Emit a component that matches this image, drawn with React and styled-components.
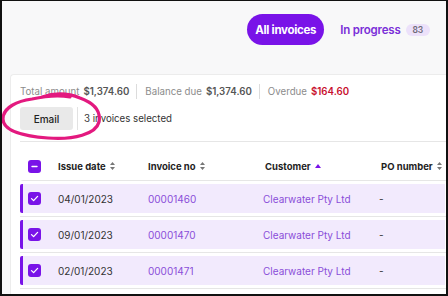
import React from "react";
import styled, { createGlobalStyle } from "styled-components";

const GlobalStyle = createGlobalStyle`
  html, body { margin: 0; padding: 0; background: #fff; }
  body { font-family: Inter, "Noto Sans", sans-serif; }
  * { box-sizing: border-box; }
`;

const purple = "#7913e8";

const Frame = styled.div`
  position: relative;
  width: 448px;
  height: 296px;
  overflow: hidden;
  border-style: solid;
  border-color: #111;
  border-width: 1px 2px 2px 2px;
  background: #f8f8f9;
`;

const Tabs = styled.div`
  display: flex;
  justify-content: flex-end;
  align-items: center;
  gap: 16px;
  height: 73px;
  padding: 13px 16px 29px 0;
`;

const Pill = styled.div`
  height: 31px;
  padding: 0 8px;
  border-radius: 16px;
  background: ${purple};
  color: #fff;
  font-size: 11.5px;
  font-weight: 700;
  letter-spacing: -0.3px;
  display: flex;
  align-items: center;
`;

const Tab = styled.div`
  display: flex;
  align-items: center;
  gap: 5px;
  color: #7a2fd8;
  font-size: 11.5px;
  font-weight: 600;
  letter-spacing: -0.2px;
`;

const Badge = styled.span`
  background: #ece1fa;
  color: #6e6a78;
  font-size: 8.5px;
  border-radius: 6px;
  padding: 1px 7px;
`;

const Card = styled.div`
  margin-left: 8px;
  height: 240px;
  background: #fff;
  border: 1px solid #ececec;
  border-right: none;
  border-radius: 4px 0 0 0;
  padding: 9px 0 0 9px;
`;

const Summary = styled.div`
  display: flex;
  align-items: center;
  height: 15px;
  font-size: 9.7px;
`;

const Stat = styled.span`
  color: #8c8c8c;
  padding: 0 7px;
  border-left: ${({ first }) => (first ? "none" : "1px solid #dcdcdc")};
  padding-left: ${({ first }) => (first ? "0" : "8px")};
  line-height: 15px;
  b {
    margin-left: 4px;
    font-weight: 600;
    color: ${({ red }) => (red ? "#c8102e" : "#555")};
  }
`;

const Actions = styled.div`
  display: flex;
  align-items: center;
  margin-top: 8px;
  height: 23px;
  font-size: 9.7px;
  color: #333;
`;

const EmailButton = styled.button`
  width: 53px;
  height: 23px;
  border: none;
  border-radius: 3px;
  background: #e9e9e9;
  font-family: inherit;
  font-size: 10px;
  font-weight: 500;
  color: #222;
  padding: 0;
`;

const Sep = styled.span`
  width: 1px;
  height: 23px;
  background: #e2e2e2;
  margin: 0 6px 0 4px;
`;

const Divider = styled.div`
  height: 1px;
  background: #e6e6e6;
  margin-top: 11px;
`;

const Grid = styled.div`
  display: grid;
  grid-template-columns: 30px 90px 115px 116px 1fr;
  align-items: center;
  white-space: nowrap;
  border-left: 3px solid ${({ selected }) => (selected ? purple : "transparent")};
  padding-left: 5px;
`;

const Header = styled(Grid)`
  height: 39px;
  padding-top: 10px;
  border-bottom: 1px solid #e6e6e6;
  font-size: 9.5px;
  font-weight: 700;
  color: #1e1e1e;
`;

const HeadCell = styled.span`
  display: flex;
  align-items: center;
  gap: 4px;
  margin-left: ${({ shift }) => shift || 0}px;
`;

const RowWrap = styled.div`
  padding: 3px 0;
  border-bottom: 1px solid #e6e6e6;
`;

const Row = styled(Grid)`
  height: 29px;
  background: #f2eafd;
  border-radius: 2px 0 0 2px;
  font-size: 10px;
  margin-right: 1px;
`;

const Cell = styled.span`
  color: ${({ link }) => (link ? "#8a4ed9" : "#333")};
`;

const Box = styled.span`
  width: 13px;
  height: 13px;
  border-radius: 3px;
  background: ${purple};
  display: flex;
  align-items: center;
  justify-content: center;
`;

const Scribble = styled.svg`
  position: absolute;
  left: 0;
  top: 0;
  width: 120px;
  height: 150px;
  pointer-events: none;
`;

const SortIcon = () => (
  <svg width="5" height="8" viewBox="0 0 5 8">
    <path d="M2.5 0 L5 3 H0 Z M2.5 8 L5 5 H0 Z" fill="#777" />
  </svg>
);

const UpIcon = () => (
  <svg width="6" height="4" viewBox="0 0 6 4">
    <path d="M3 0 L6 4 H0 Z" fill={purple} />
  </svg>
);

const Check = () => (
  <Box>
    <svg width="9" height="9" viewBox="0 0 9 9">
      <path d="M1.5 4.6 L3.6 6.6 L7.6 2.4" stroke="#fff" strokeWidth="1.3" fill="none" strokeLinecap="round" strokeLinejoin="round" />
    </svg>
  </Box>
);

const Minus = () => (
  <Box>
    <svg width="9" height="9" viewBox="0 0 9 9">
      <path d="M2 4.5 H7" stroke="#fff" strokeWidth="1.4" strokeLinecap="round" />
    </svg>
  </Box>
);

const rows = [
  { date: "04/01/2023", no: "00001460" },
  { date: "09/01/2023", no: "00001470" },
  { date: "02/01/2023", no: "00001471" },
];

export default function App() {
  return (
    <>
      <GlobalStyle />
      <Frame>
        <Tabs>
          <Pill>All invoices</Pill>
          <Tab>
            In progress <Badge>83</Badge>
          </Tab>
        </Tabs>
        <Card>
          <Summary>
            <Stat first>Total amount<b>$1,374.60</b></Stat>
            <Stat>Balance due<b>$1,374.60</b></Stat>
            <Stat red>Overdue<b>$164.60</b></Stat>
          </Summary>
          <Actions>
            <EmailButton>Email</EmailButton>
            <Sep />
            3 invoices selected
          </Actions>
          <Divider />
          <Header>
            <Minus />
            <HeadCell>Issue date <SortIcon /></HeadCell>
            <HeadCell>Invoice no <SortIcon /></HeadCell>
            <HeadCell shift={2}>Customer <UpIcon /></HeadCell>
            <HeadCell shift={2}>PO number <SortIcon /></HeadCell>
          </Header>
          {rows.map((r) => (
            <RowWrap key={r.no}>
              <Row selected>
                <Check />
                <Cell>{r.date}</Cell>
                <Cell link>{r.no}</Cell>
                <Cell link>Clearwater Pty Ltd</Cell>
                <Cell>-</Cell>
              </Row>
            </RowWrap>
          ))}
        </Card>
        <Scribble viewBox="0 0 120 150">
          <path
            d="M40 96 C 52 92, 66 92, 78 97 C 92 102, 99 110, 97 121 C 94 133, 72 139, 46 137 C 20 135, 1 130, 1 118 C 1 106, 16 100, 30 98 C 44 95, 56 94, 68 96"
            stroke="#e3197f"
            strokeWidth="3.2"
            fill="none"
            strokeLinecap="round"
          />
        </Scribble>
      </Frame>
    </>
  );
}
